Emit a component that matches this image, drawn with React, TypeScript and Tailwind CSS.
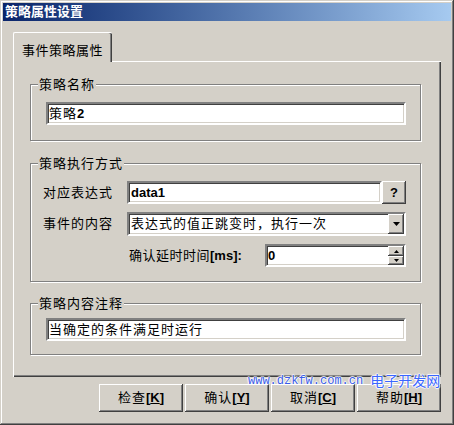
import React from "react";

const raised =
  "bg-[#d4d0c8] shadow-[inset_-1px_-1px_0_#404040,inset_1px_1px_0_#ffffff,inset_-2px_-2px_0_#808080]";
const sunken =
  "bg-white border-2 border-t-[#808080] border-l-[#808080] border-r-white border-b-white shadow-[inset_1px_1px_0_#404040,inset_-1px_-1px_0_#d4d0c8]";

function Group({ title, className, children }: { title: string; className?: string; children: React.ReactNode }) {
  return (
    <div className={`relative border border-[#808080] shadow-[1px_1px_0_#ffffff,inset_1px_1px_0_#ffffff] ${className ?? ""}`}>
      <span className="absolute left-[7px] top-[-7px] bg-[#d4d0c8] px-[1px] text-[13px] leading-[14px] tracking-[1px]">
        {title}
      </span>
      {children}
    </div>
  );
}

function DownArrow() {
  return (
    <svg width="7" height="4" viewBox="0 0 7 4">
      <path d="M0 0h7L3.5 4z" fill="#000" />
    </svg>
  );
}

export default function App() {
  return (
    <div className="relative w-[454px] h-[425px] bg-[#d4d0c8] p-[3px] text-black font-['Liberation_Sans','Noto_Sans_CJK_SC',sans-serif] shadow-[inset_-1px_-1px_0_#404040,inset_1px_1px_0_#d4d0c8,inset_-2px_-2px_0_#808080,inset_2px_2px_0_#ffffff] overflow-hidden">
      {/* Title bar */}
      <div className="h-[18px] bg-linear-to-r from-[#0a246a] to-[#a6caf0] flex items-center pl-[2px]">
        <span className="text-white font-bold text-[13px] leading-[14px]">策略属性设置</span>
      </div>

      <div className="ml-[10px] w-[428px]">
        {/* Tab */}
        <div className="mt-[11px] relative z-10 -mb-[1px] w-[99px] h-[30px] bg-[#d4d0c8] border-l border-t border-white rounded-tl-[2px] rounded-tr-[2px] shadow-[inset_-1px_0_0_#404040,inset_-2px_0_0_#808080] pl-[8px] pt-[5px]">
          <span className="text-[13px] leading-[16px] tracking-[0.5px]">事件策略属性</span>
        </div>

        {/* Tab panel */}
        <div className="h-[316px] border-t border-l border-white shadow-[inset_-1px_-1px_0_#404040,inset_-2px_-2px_0_#808080] pt-[22px] pl-[16px] pr-[20px]">
          <Group title="策略名称" className="h-[57px] pt-[17px] pl-[15px] pr-[14px]">
            <div className={`${sunken} h-[23px] flex items-center pl-[1px] text-[13px] leading-[14px]`}>
              <span className="tracking-[1px]">策略</span>
              <span className="font-bold">2</span>
            </div>
          </Group>

          <Group title="策略执行方式" className="mt-[22px] h-[119px] pt-[17px] pl-[12px] pr-[14px]">
            <div className="flex items-center h-[23px]">
              <span className="w-[84px] shrink-0 text-[13px] tracking-[1px]">对应表达式</span>
              <div className={`${sunken} flex-1 h-[23px] flex items-center pl-[2px] text-[13px] font-bold`}>data1</div>
              <div className={`${raised} w-[24px] h-[23px] flex items-center justify-center text-[13px] font-bold`}>?</div>
            </div>
            <div className="flex items-center h-[24px] mt-[8px]">
              <span className="w-[84px] shrink-0 text-[13px] tracking-[1px]">事件的内容</span>
              <div className={`${sunken} flex-1 h-[24px] flex items-center`}>
                <span className="flex-1 pl-[2px] text-[13px] tracking-[1px] whitespace-nowrap overflow-hidden">
                  表达式的值正跳变时，执行一次
                </span>
                <div className={`${raised} w-[16px] h-[20px] flex items-center justify-center`}>
                  <DownArrow />
                </div>
              </div>
            </div>
            <div className="flex items-center h-[23px] mt-[8px] pl-[86px]">
              <span className="w-[136px] shrink-0 text-[13px] tracking-[0.5px] whitespace-nowrap">
                确认延时时间<span className="font-bold tracking-normal">[ms]:</span>
              </span>
              <div className={`${sunken} flex-1 h-[23px] flex items-center`}>
                <span className="flex-1 pl-[1px] text-[13px] font-bold">0</span>
                <div className="flex flex-col w-[16px] h-[19px]">
                  <div className={`${raised} h-[10px] flex items-center justify-center`}>
                    <svg width="5" height="3" viewBox="0 0 5 3">
                      <path d="M0 3h5L2.5 0z" fill="#000" />
                    </svg>
                  </div>
                  <div className={`${raised} h-[9px] flex items-center justify-center`}>
                    <svg width="5" height="3" viewBox="0 0 5 3">
                      <path d="M0 0h5L2.5 3z" fill="#000" />
                    </svg>
                  </div>
                </div>
              </div>
            </div>
          </Group>

          <Group title="策略内容注释" className="mt-[21px] h-[52px] pt-[14px] pl-[15px] pr-[14px]">
            <div className={`${sunken} h-[23px] flex items-center pl-[1px] text-[13px] tracking-[1px]`}>
              当确定的条件满足时运行
            </div>
          </Group>
        </div>

        {/* Buttons */}
        <div className="mt-[7px] flex justify-end gap-[2px]">
          {[
            ["检查", "K"],
            ["确认", "Y"],
            ["取消", "C"],
            ["帮助", "H"],
          ].map(([label, key]) => (
            <div key={key} className={`${raised} w-[84px] h-[28px] flex items-center justify-center text-[13px]`}>
              <span className="tracking-[1px]">{label}</span>
              <span className="font-bold">
                [<span className="underline">{key}</span>]
              </span>
            </div>
          ))}
        </div>
      </div>

      {/* Watermark */}
      <div className="absolute left-[248px] top-[371px] flex items-start gap-[7px] pointer-events-none">
        <span className="mt-[3px] font-['Liberation_Mono',monospace] text-[12px] leading-[14px] text-[#3a5ce8] [text-shadow:1px_0_1px_#ffffff,-1px_0_1px_#ffffff,0_1px_1px_#ffffff,0_-1px_1px_#ffffff]">
          www.dzkfw.com.cn
        </span>
        <span className="font-['Noto_Sans_CJK_SC',sans-serif] text-[14px] leading-[18px] text-[#3a66ff] [text-shadow:1px_0_1px_#ffffff,-1px_0_1px_#ffffff,0_1px_1px_#ffffff,0_-1px_1px_#ffffff]">
          电子开发网
        </span>
      </div>
    </div>
  );
}
